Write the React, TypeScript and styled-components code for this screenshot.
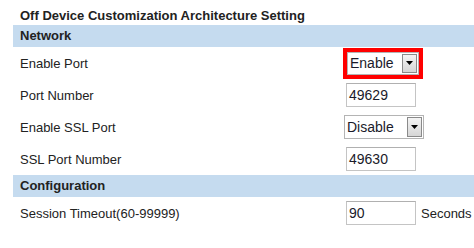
import React from "react";
import styled, { createGlobalStyle } from "styled-components";

const Global = createGlobalStyle`
  html, body { margin: 0; padding: 0; background: #fff; }
  body { font-family: "Liberation Sans", Arial, sans-serif; color: #222; }
`;

const Page = styled.div`
  padding-left: 13px;
  width: 461px;
`;

const Title = styled.div`
  height: 25px;
  padding: 8px 0 0 7px;
  box-sizing: border-box;
  font-size: 13px;
  font-weight: bold;
  line-height: 15px;
`;

const Band = styled.div`
  height: 22px;
  background: #c5dbef;
  padding-left: 7px;
  font-size: 13px;
  font-weight: bold;
  line-height: 22px;
`;

const Row = styled.div`
  height: 32px;
  display: grid;
  grid-template-columns: 330px 1fr;
  align-items: center;
  font-size: 13px;
`;

const Label = styled.div`
  padding-left: 7px;
`;

const Control = styled.div<{ $shift?: number }>`
  display: flex;
  align-items: center;
  margin-left: ${(p) => p.$shift ?? 0}px;
`;

const Highlight = styled.div`
  border: 4px solid #f00;
  display: flex;
`;

const SelectBox = styled.div<{ $w: number; $h: number }>`
  width: ${(p) => p.$w}px;
  height: ${(p) => p.$h}px;
  box-sizing: border-box;
  border: 1px solid #b4b4b4;
  background: #fff;
  display: flex;
  align-items: stretch;
  font-size: 14px;
`;

const SelectText = styled.span`
  flex: 1;
  padding-left: 2px;
  display: flex;
  align-items: center;
  color: #1a1a2a;
`;

const ArrowBtn = styled.span`
  width: 13px;
  margin: 1px;
  border: 1px solid #8a8a8a;
  background: linear-gradient(#f4f4f4, #d6d6d6);
  display: flex;
  align-items: center;
  justify-content: center;
`;

const Input = styled.div`
  width: 70px;
  height: 24px;
  box-sizing: border-box;
  border: 1px solid #c4c4c4;
  border-top-color: #b0b0b0;
  padding-left: 2px;
  font-size: 14px;
  line-height: 22px;
  color: #1a1a2a;
`;

const Unit = styled.span`
  margin-left: 5px;
  font-size: 13px;
`;

const Arrow = () => (
  <svg width="7" height="4" viewBox="0 0 7 4">
    <polygon points="0,0 7,0 3.5,4" fill="#000" />
  </svg>
);

const Select = ({ value, w, h }: { value: string; w: number; h: number }) => (
  <SelectBox $w={w} $h={h}>
    <SelectText>{value}</SelectText>
    <ArrowBtn>
      <Arrow />
    </ArrowBtn>
  </SelectBox>
);

export default function App() {
  return (
    <>
      <Global />
      <Page>
        <Title>Off Device Customization Architecture Setting</Title>
        <Band>Network</Band>
        <Row>
          <Label>Enable Port</Label>
          <Control>
            <Highlight>
              <Select value="Enable" w={72} h={23} />
            </Highlight>
          </Control>
        </Row>
        <Row>
          <Label>Port Number</Label>
          <Control $shift={3}>
            <Input>49629</Input>
          </Control>
        </Row>
        <Row>
          <Label>Enable SSL Port</Label>
          <Control $shift={1}>
            <Select value="Disable" w={80} h={24} />
          </Control>
        </Row>
        <Row>
          <Label>SSL Port Number</Label>
          <Control $shift={3}>
            <Input>49630</Input>
          </Control>
        </Row>
        <Band>Configuration</Band>
        <Row>
          <Label>Session Timeout(60-99999)</Label>
          <Control $shift={3}>
            <Input>90</Input>
            <Unit>Seconds</Unit>
          </Control>
        </Row>
      </Page>
    </>
  );
}
